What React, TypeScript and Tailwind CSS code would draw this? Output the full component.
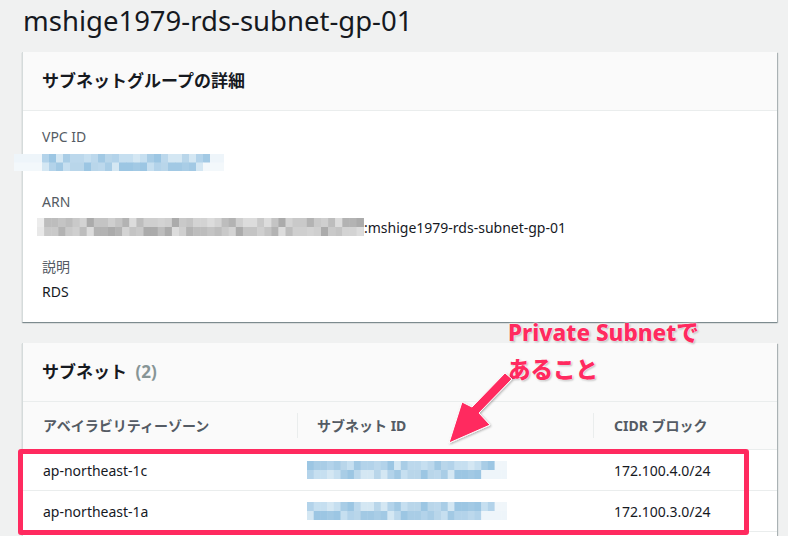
const font = "font-['Noto_Sans','Noto_Sans_CJK_JP',sans-serif]";

// pixelated blur blocks (masked ids in the screenshot)
function Mosaic({
  width,
  height,
  cell,
  colors,
}: {
  width: number;
  height: number;
  cell: number;
  colors: string[][];
}) {
  return (
    <svg width={width} height={height} className="block shrink-0">
      {colors.map((row, r) =>
        row.map((c, i) => (
          <rect key={`${r}-${i}`} x={i * cell} y={r * (height / colors.length)} width={cell + 0.5} height={height / colors.length + 0.5} fill={c} />
        ))
      )}
    </svg>
  );
}

const blues = ["#b9d6ea", "#a9cde6", "#c6dff0", "#9cc6e3", "#b3d3ea", "#d4e7f3", "#a2c9e4", "#bcd8ec"];
const greys = ["#c9c9c9", "#bdbdbd", "#d3d3d3", "#b3b3b3", "#c4c4c4", "#dcdcdc", "#ababab", "#cfcfcf"];

function pick(list: string[], n: number, seed: number) {
  return Array.from({ length: n }, (_, i) => list[(i * 5 + seed * 3 + ((i * i) % 7)) % list.length]);
}

function fade(row: string[], lead: number, trail: number, light: string) {
  return row.map((c, i) => (i < lead || i >= row.length - trail ? light : c));
}

function Field({ label, children }: { label: string; children: React.ReactNode }) {
  return (
    <div className="flex flex-col gap-[5px]">
      <div className="text-[14px] leading-[20px] text-[#545b64]">{label}</div>
      <div className="text-[14px] leading-[20px] text-[#16191f]">{children}</div>
    </div>
  );
}

const rows = [
  { az: "ap-northeast-1c", cidr: "172.100.4.0/24", seed: 1 },
  { az: "ap-northeast-1a", cidr: "172.100.3.0/24", seed: 4 },
];

export default function App() {
  return (
    <div className={`relative min-h-[536px] overflow-hidden bg-[#f0f1f1] pl-[22px] pr-[11px] ${font}`}>
      <h1 className="pt-[2px] pl-px text-[27.5px] leading-[37px] text-[#16191f]">mshige1979-rds-subnet-gp-01</h1>

      {/* details card */}
      <div className="mt-[13px] border-l border-[#d5dbdb] bg-white shadow-[1px_1px_1px_0_rgba(0,28,36,0.25),0_1px_1px_0_rgba(0,28,36,0.3)]">
        <div className="flex h-[59px] items-center border-b border-[#eaeded] bg-[#fafafa] px-[19px]">
          <h2 className="text-[17px] font-bold text-[#16191f]">サブネットグループの詳細</h2>
        </div>
        <div className="flex flex-col gap-[20px] pt-[16px] pb-[20px] pl-[19px]">
          <div className="flex flex-col gap-[5px]">
            <div className="text-[14px] leading-[20px] text-[#545b64]">VPC ID</div>
            <div className="-ml-[28px] flex h-[20px] items-center">
              <Mosaic
                width={210}
                height={17}
                cell={7}
                colors={[
                  fade(pick(blues, 30, 2), 4, 2, "#eef5fa"),
                  fade(pick(blues, 30, 5), 4, 3, "#f3f8fb"),
                ]}
              />
            </div>
          </div>
          <div className="flex flex-col gap-[5px]">
            <div className="text-[14px] leading-[20px] text-[#545b64]">ARN</div>
            <div className="-ml-[5px] flex h-[20px] items-center text-[14px] text-[#16191f]">
              <Mosaic
                width={327}
                height={18}
                cell={7.1}
                colors={[
                  fade(pick(greys, 47, 1), 1, 0, "#ececec"),
                  fade(pick(greys, 47, 6), 1, 0, "#e8e8e8"),
                ]}
              />
              <span>:mshige1979-rds-subnet-gp-01</span>
            </div>
          </div>
          <Field label="説明">RDS</Field>
        </div>
      </div>

      {/* subnets card */}
      <div className="mt-[21px] border-l border-[#d5dbdb] bg-white pb-[20px] shadow-[1px_1px_1px_0_rgba(0,28,36,0.25),0_1px_1px_0_rgba(0,28,36,0.3)]">
        <div className="flex h-[59px] items-center border-b border-[#eaeded] bg-[#fafafa] px-[19px]">
          <h2 className="text-[17px] font-bold text-[#16191f]">
            サブネット <span className="ml-1 font-bold text-[#879596]">(2)</span>
          </h2>
        </div>
        <div className="relative">
          <div className="grid h-[48px] grid-cols-[274px_296px_1fr] items-center border-b border-[#eaeded] bg-[#fafafa] text-[14px] font-bold text-[#545b64]">
            <div className="pl-[20px]">アベイラビリティーゾーン</div>
            <div className="border-l border-[#eaeded] pl-[19px] leading-[25px]">サブネット ID</div>
            <div className="border-l border-[#eaeded] pl-[20px] leading-[25px]">CIDR ブロック</div>
          </div>
          {rows.map((r) => (
            <div
              key={r.az}
              className="grid h-[41px] grid-cols-[274px_296px_1fr] items-center border-b border-[#eaeded] text-[14px] text-[#16191f]"
            >
              <div className="pl-[20px]">{r.az}</div>
              <div className="pl-[10px]">
                <Mosaic
                  width={200}
                  height={18}
                  cell={6.7}
                  colors={[
                    fade(pick(blues, 30, r.seed), 0, 2, "#f0f6fa"),
                    fade(pick(blues, 30, r.seed + 3), 0, 4, "#eef5fa"),
                  ]}
                />
              </div>
              <div className="pl-[21px]">{r.cidr}</div>
            </div>
          ))}

          {/* highlight box */}
          <div className="absolute top-[47px] left-[-5px] h-[86px] w-[731px] rounded-[3px] border-[5px] border-[#ff2a5f]" />
        </div>
      </div>

      {/* annotation */}
      <div className="absolute top-[314px] left-[508px] text-[22.5px] leading-[37px] font-extrabold text-[#ff2a5f] [text-shadow:0_0_2px_#fff,0_0_2px_#fff,1px_1px_2px_rgba(0,0,0,0.35)]">
        <div>Private Subnetで</div>
        <div>あること</div>
      </div>
      <svg className="absolute top-0 left-0" width={788} height={536}>
        <defs>
          <filter id="sh" x="-20%" y="-20%" width="140%" height="140%">
            <feDropShadow dx="1" dy="1" stdDeviation="1" floodColor="#000" floodOpacity="0.3" />
          </filter>
        </defs>
        <polygon
          points="505,373 512,379 479,413 490,425 449,443 462,402 472,407"
          fill="#ff2a5f"
          stroke="#fff"
          strokeWidth={1}
          strokeLinejoin="round"
          filter="url(#sh)"
        />
      </svg>
    </div>
  );
}
